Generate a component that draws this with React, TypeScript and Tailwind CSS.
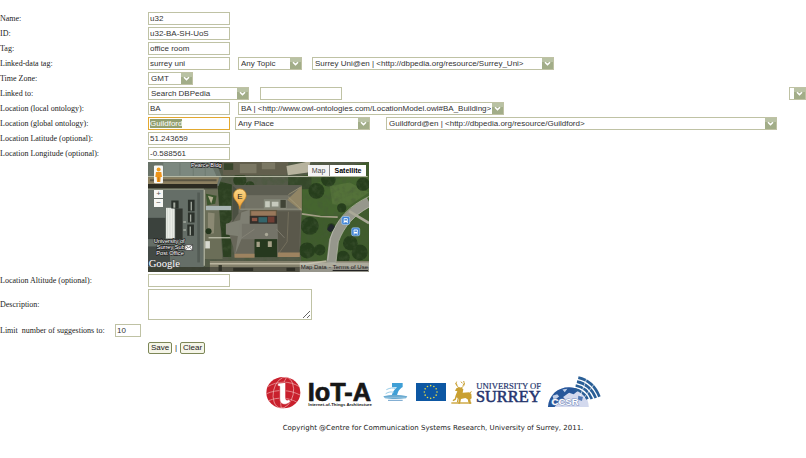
import { useEffect, useRef } from "react";

const inputClass =
  "h-[13px] w-[82px] border border-[#bfc2a4] bg-white px-px font-['Liberation_Sans',sans-serif] text-[8px] leading-[11px] text-[#333] outline-none";

type SelectProps = { id?: string; label: string; value: string; className: string };

function Select({ id, label, value, className }: SelectProps) {
  return (
    <span className={`relative h-[13px] shrink-0 ${className}`}>
      <select
        id={id}
        aria-label={label}
        className="block h-full w-full appearance-none overflow-hidden border border-[#bfc2a4] bg-white pr-3 pl-[2px] font-['Liberation_Sans',sans-serif] text-[8px] leading-[11px] text-[#333] outline-none"
      >
        <option>{value}</option>
      </select>
      <svg viewBox="0 0 11 11" className="pointer-events-none absolute top-px right-px size-[11px]">
        <path d="M0 0h11v11H0z" fill="#a2ad88" />
        <path d="M0 0h11v4H0z" fill="#b9c2a4" />
        <path d="M3 4.2l2.5 2.4L8 4.2" fill="none" stroke="#fff" strokeWidth="1.5" />
      </svg>
    </span>
  );
}

function Label({ id, text }: { id: string; text: string }) {
  return (
    <label htmlFor={id} className="whitespace-nowrap">
      {text}
    </label>
  );
}

function Field({ id, label, value }: { id: string; label: string; value: string }) {
  return (
    <>
      <Label id={id} text={label} />
      <div className="flex">
        <input id={id} type="text" defaultValue={value} className={inputClass} />
      </div>
    </>
  );
}

function Bus({ x, y }: { x: number; y: number }) {
  return (
    <g transform={`translate(${x} ${y})`}>
      <rect x="-12" y="-12" width="24" height="24" rx="5" fill="#3f83d6" stroke="#a9cdf5" strokeWidth="2" />
      <rect x="-6" y="-7" width="12" height="12" rx="2" fill="#fff" />
      <path d="M-4-4h8v4h-8z" fill="#3f83d6" />
      <path d="M-5 5v3M5 5v3" stroke="#fff" strokeWidth="3" />
    </g>
  );
}

function Satellite() {
  return (
    <svg viewBox="24 18 664 331" preserveAspectRatio="xMidYMid slice" className="block h-[110px] w-full">
      <defs>
        <filter id="grain" x="0" y="0" width="100%" height="100%">
          <feTurbulence type="fractalNoise" baseFrequency="0.06" numOctaves="3" seed="4" />
          <feColorMatrix values="0 0 0 0 0.06  0 0 0 0 0.1  0 0 0 0 0.04  2.6 0 0 0 -1.1" />
        </filter>
        <linearGradient id="pin" x2="0" y2="1">
          <stop stopColor="#fbd98c" />
          <stop offset="1" stopColor="#f0a030" />
        </linearGradient>
      </defs>
      <rect x="24" y="18" width="664" height="331" fill="#545a48" />

      {/* park and trees */}
      <path d="M484 60l204-42v331H484z" fill="#3f5c2c" />
      <path d="M488 100l70-30 130-10v70l-90 50H490z" fill="#45652f" />
      <path d="M570 90l60-10 58 30-60 40-50-5z" fill="#547239" />
      <path d="M445 60h70v40h-70z" fill="#35482a" />
      <g fill="#263e1c">
        <circle cx="510" cy="210" r="27" />
        <circle cx="502" cy="284" r="24" />
        <circle cx="540" cy="282" r="17" />
        <circle cx="530" cy="105" r="24" />
        <circle cx="566" cy="70" r="22" />
        <circle cx="606" cy="156" r="14" />
        <circle cx="632" cy="262" r="22" />
        <circle cx="660" cy="290" r="24" />
        <circle cx="610" cy="305" r="20" />
        <circle cx="670" cy="85" r="20" />
        <circle cx="575" cy="214" r="12" />
      </g>
      <g fill="#2c4021">
        <path d="M236 76l40 10-2 218h-24l-6-80-14-60z" />
        <circle cx="300" cy="72" r="20" />
        <circle cx="330" cy="90" r="14" />
      </g>
      <rect x="24" y="18" width="664" height="331" filter="url(#grain)" opacity=".45" />

      {/* northern block */}
      <path d="M24 18h204l18 46-10 26H24z" fill="#687268" />
      <path d="M70 20h142l18 42H70z" fill="#7c887f" />
      <path d="M24 64h214l-6 20H24z" fill="#8c8060" />
      <path d="M30 70h200v6H30z" fill="#5b5643" />
      <path d="M24 84h208v13H24z" fill="#2c2b21" />
      <path d="M120 22v36M160 22v38M196 24v38" stroke="#677269" strokeWidth="2" />
      <path d="M246 18h200l-6 40H250z" fill="#625f4d" />
      <path d="M300 24h50v28h-50zM366 20h40v20h-40z" fill="#7b7864" />
      <path d="M252 22h28v20h-28z" fill="#37452a" />
      <path d="M440 30l60-12h12l-8 32-60 8z" fill="#b7b39e" />
      <path d="M24 62h660" stroke="#b9bda8" strokeWidth="3" fill="none" />

      {/* western block */}
      <path d="M24 100h168v234H24z" fill="#656e67" />
      <path d="M24 100h168" stroke="#9a9d8c" strokeWidth="3" />
      <path d="M192 100h42l14 210h-56z" fill="#6b6e58" />
      <path d="M78 156h26v92H78z" fill="#e9ece6" />
      <path d="M106 158h22v92h-22z" fill="#30352f" />
      <path d="M24 186h52v64H24z" fill="#3b423d" />
      <path d="M24 272h66v60H24z" fill="#424945" />
      <path d="M82 156v92M90 156v92M98 156v92" stroke="#aab2ae" strokeWidth="1" />
      <g fill="#2b312b">
        <path d="M94 134h22v24H94zM144 132h20v34h-20zM144 170h20v30h-20zM142 206h20v34h-20z" />
        <path d="M172 110h8v210h-8z" opacity=".3" />
      </g>
      <g fill="#a4aaa0">
        <path d="M100 140h6v16h-6zM152 138h4v26h-4zM150 176h4v22h-4zM149 212h4v26h-4z" />
        <path d="M130 196h8v5h-8zM130 220h8v5h-8z" />
      </g>
      <path d="M191 102h4v228h-4z" fill="#abae9c" />
      <path d="M198 150h76v13h-76z" fill="#a9b5b3" />
      <path d="M198 114l32 6-4 24-24 4z" fill="#3c552d" />
      <path d="M204 120l16 4-6 20z" fill="#b0ac8e" />
      <path d="M204 170l20 2-2 60-18 4z" fill="#8b8973" />
      <path d="M196 256h14v22h-14z" fill="#d7d9cf" />
      <circle cx="206" cy="226" r="9" fill="#23351d" />
      <path d="M206 246h80" stroke="#d5d5c5" strokeWidth="3" />

      {/* main building */}
      <path d="M278 88h208v80l-8 136H284l-4-30-20-64 18-20z" fill="#68675a" />
      <path d="M278 88h208l-40 30H310z" fill="#5c5d51" />
      <path d="M310 118h136l40 42H300z" fill="#727265" />
      <path d="M486 90v76l-44-34z" fill="#918565" />
      <path d="M446 116l36-22M446 124l38 36" stroke="#aaa17e" strokeWidth="2" />
      <path d="M278 88l32 30-10 48-22 34z" fill="#4b5042" />
      <path d="M258 204l46-12v50l-46-6z" fill="#7f8073" />
      <path d="M304 170l26-8v54l-26 36-18 44z" fill="#7f7f73" />
      <path d="M330 162h82v60h-82z" fill="#625740" />
      <path d="M334 166h74v14h-74z" fill="#99785b" />
      <path d="M330 180h82v42h-82z" fill="#332f2a" />
      <path d="M356 184h26v16h-26z" fill="#34656b" />
      <path d="M384 182h20v18h-20z" fill="#713e34" />
      <path d="M336 186h16v10h-16z" fill="#8c5545" />
      <path d="M306 204h128v46H306z" fill="#747368" />
      <path d="M344 250h68v54h-68z" fill="#26381e" />
      <path d="M350 258h10v16h-10zM384 256h12v18h-12z" fill="#a5a087" />
      <path d="M412 166h70l-4 132h-62z" fill="#5a584b" />
      <path d="M446 168l-4 90-26 36" stroke="#817a65" strokeWidth="2" fill="none" />
      <path d="M284 294h60v12h-60zM414 290h66v14h-66z" fill="#9d8360" />
      <path d="M306 246l38-26M434 246l-24-26" stroke="#8c897b" strokeWidth="2" />
      <path d="M296 128l20 4v30l-20 10" fill="#6d6d61" />
      <circle cx="380" cy="236" r="5" fill="#aaa897" />
      <path d="M372 130h68v28h-68z" fill="#85897a" />
      <path d="M376 136h14v18h-14zM396 138h20v14h-20z" fill="#c6cabd" />
      <path d="M422 132h16v24h-16z" fill="#414436" />
      <path d="M300 160h186" stroke="#abac9b" strokeWidth="2" />

      {/* roads */}
      <path d="M210 316h478v33H210z" fill="#84816c" />
      <path d="M210 324h290l60-8" stroke="#bbb6a0" strokeWidth="5" fill="none" />
      <path d="M236 328h10v18h-10zM280 336h60v10h-60zM440 336h26v10h-26z" fill="#38392c" />
      <path d="M486 174l56 8 52 2" stroke="#a39e86" strokeWidth="5" fill="none" />
      <path d="M688 138c-50 26-86 60-106 116l-8 68" stroke="#96978c" strokeWidth="28" fill="none" />
      <path d="M688 122c-56 26-98 66-116 126l-8 66" stroke="#c5c5b8" strokeWidth="2" fill="none" />
      <path d="M688 154c-44 24-74 56-92 104l-7 60" stroke="#c5c5b8" strokeWidth="2" fill="none" />
      <path d="M628 166l60 36" stroke="#aaa998" strokeWidth="8" />
      <rect x="566" y="206" width="16" height="22" rx="5" transform="rotate(35 574 216)" fill="#20262b" />
      <path d="M24 334h664v15H24z" fill="#23251f" opacity=".5" />
      <path d="M480 320h208v29H480z" fill="#d8d8d0" opacity=".5" />

      <Bus x={618} y={194} />
      <Bus x={648} y={228} />

      {/* place names */}
      <g
        fill="#fff"
        stroke="#222"
        strokeWidth="4"
        paintOrder="stroke"
        fontFamily="Liberation Sans, sans-serif"
        fontSize="17"
      >
        <text x="153" y="33">Pearce Bldg</text>
        <text x="41" y="263">University of</text>
        <text x="50" y="281">Surrey Sub</text>
        <text x="49" y="298">Post Office</text>
      </g>
      <path d="M135 267h23v17h-23z" fill="#fff" stroke="#333" strokeWidth="2" />
      <path d="M135 267l11 9 12-9M135 284l8-9M158 284l-8-9" fill="none" stroke="#333" strokeWidth="2" />

      {/* marker */}
      <path d="M300 160c-2-22-19-26-19-42a19 19 0 0 1 38 0c0 16-17 20-19 42z" fill="url(#pin)" stroke="#c78220" strokeWidth="2" />
      <text x="300" y="128" textAnchor="middle" fontFamily="Liberation Sans, sans-serif" fontSize="24" fill="#222">E</text>

      {/* street view figure */}
      <rect x="42" y="29" width="27" height="53" rx="3" fill="#f7f7f4" />
      <circle cx="56" cy="41" r="6" fill="#ef9d1e" />
      <path d="M48 48h16l2 15h-4l-1 15H51l-1-15h-4z" fill="#ed941b" />
      <path d="M56 64v13" stroke="#b86b0e" strokeWidth="2" />

      <text x="26" y="334" fontFamily="Liberation Serif, serif" fontSize="32" fill="#fff" stroke="#444" strokeWidth="3" paintOrder="stroke">
        Google
      </text>
    </svg>
  );
}

function Map() {
  return (
    <div className="relative w-[221px] overflow-hidden font-['Liberation_Sans',sans-serif]">
      <Satellite />
      <div className="absolute top-7 left-[6px] flex flex-col gap-px text-[8px] leading-[8px] text-[#555]">
        <button type="button" aria-label="Zoom in" className="h-[8px] w-[9px] bg-[#f7f7f4]">+</button>
        <button type="button" aria-label="Zoom out" className="h-[8px] w-[9px] bg-[#f7f7f4]">−</button>
      </div>
      <div className="absolute top-[3px] right-[3px] flex h-[11px] text-[7px] leading-[11px]">
        <button type="button" className="w-[22px] border-r border-[#888] bg-[#f4f4f4] text-[#444]">Map</button>
        <button type="button" className="w-9 bg-white font-bold text-black">Satellite</button>
      </div>
      <div className="absolute right-px bottom-0 flex gap-[2px] text-[6px] leading-[10px] text-[#222]">
        <span>Map Data</span>
        <span>-</span>
        <a href="#terms" className="underline">Terms of Use</a>
      </div>
    </div>
  );
}

const stars = Array.from({ length: 12 }, (_, i) => (i * Math.PI) / 6);

function Logos() {
  return (
    <div className="flex h-9 items-center justify-center">
      {/* IoT-A */}
      <svg viewBox="36 33 321 99" className="mr-[10px] h-[33px] w-[107px]" aria-label="IoT-A">
        <ellipse cx="88" cy="83" rx="51" ry="47" fill="#c9202d" />
        <g fill="none" stroke="#f0b5b5" strokeWidth="2">
          <ellipse cx="88" cy="83" rx="30" ry="47" transform="rotate(12 88 83)" />
          <path d="M41 65c30-18 66-18 95 0M38 86c30-14 70-12 100 4M44 107c28-12 60-9 84 4M98 37C82 60 76 100 82 130" />
        </g>
        <path
          d="M71 55l24-3v46c0 9 6 9 11 4l3 8c-12 13-32 11-32-8V64l-6-1z"
          fill="#fff"
          stroke="#c9202d"
          strokeWidth="2"
        />
        <g fontFamily="Liberation Sans, sans-serif" fontWeight="bold" fill="#171717">
          <text x="161" y="107" fontSize="76" stroke="#171717" strokeWidth="2">IoT-A</text>
          <text x="163" y="124" fontSize="13">Internet-of-Things Architecture</text>
        </g>
      </svg>

      {/* Seventh framework programme */}
      <svg viewBox="386 51 75 60" className="mr-2 h-5 w-[25px]" aria-label="Seventh Framework Programme">
        <path d="M413 54h32v12c-13 8-16 18-18 32h-16c2-15 8-23 17-31h-15z" fill="#3f9fd6" />
        <path d="M396 74c12-6 20-6 28-3M394 86c10-6 16-6 24-4" stroke="#9bcde8" strokeWidth="3" fill="none" />
        <path d="M387 94c20-5 50-5 72 0l-4 6c-20 3-45 3-63 0z" fill="#67a9d0" />
        <path d="M392 97h62" stroke="#dcecf7" strokeWidth="1" />
        <path d="M401 106h44" stroke="#6b9fca" strokeWidth="3" />
      </svg>

      {/* EU flag */}
      <svg viewBox="0 0 90 54" className="mr-[5px] h-[18px] w-[30px]" aria-label="European Union">
        <path d="M0 0h90v54H0z" fill="#0d57a3" />
        {stars.map((a) => (
          <circle key={a} cx={44 + 19 * Math.cos(a)} cy={27 + 19 * Math.sin(a)} r="2.4" fill="#e5da45" />
        ))}
      </svg>

      {/* University of Surrey */}
      <svg viewBox="63 45 276 75" className="mr-1 h-[25px] w-[92px]" aria-label="University of Surrey">
        <g fill="#c9a032">
          <path d="M79 70l8-3 8 1 5 5-2 10 20-1 6 5 1 13-4 3 2 13h-5l-5-13-7-4-13 3-3 14h-5l1-14-6-5-3 8-8 4-1-4 6-4 3-10 5-12-7-2z" />
          <path d="M64 112h60v4H64z" />
        </g>
        <g fill="none" stroke="#c9a032" strokeWidth="3">
          <path d="M89 69c-9-4-13-10-9-19M83 61l-7-6M92 69c9-3 13-10 9-21M98 61l7-6M97 55l-4-5M121 84l3-5" />
          <path d="M85 97l-3 15M114 98l3 14" />
        </g>
        <g fontFamily="Liberation Serif, serif" fill="#26366e" stroke="#26366e">
          <text x="139" y="72" fontSize="26" strokeWidth=".6">UNIVERSITY OF</text>
          <text x="138" y="111" fontSize="49" strokeWidth="1.6">SURREY</text>
        </g>
      </svg>

      {/* CCSR */}
      <svg viewBox="346 31 162 97" className="h-8 w-[54px]" aria-label="CCSR">
        <path d="M348 125c3-37 30-60 64-60 36 0 58 26 60 60z" fill="#d3d9ee" />
        <path d="M348 125c3-37 30-60 64-60 12 0 22 3 31 8l-17 13-14-4-18 13 7 8-18 3-15 19z" fill="#27579a" />
        <path d="M362 91l14-5 6 7-16 12zM392 72l15-2-8 10z" fill="#c2d0e8" />
        <path d="M440 91l14 4-3 12-12-5z" fill="#527ab5" />
        <g fill="none" stroke="#2a5f96" strokeWidth="8">
          <path d="M440 36c28 6 52 27 64 58" />
          <path d="M436 48c26 5 46 23 57 50" />
          <path d="M432 60c23 4 40 19 49 41" />
          <path d="M428 71c18 3 32 13 40 30" />
        </g>
        <path d="M466 38l-20 54M487 57l-30 41" stroke="#fff" strokeWidth="2" />
        <text
          x="359"
          y="119"
          fontFamily="Liberation Sans, sans-serif"
          fontWeight="bold"
          fontSize="29"
          fill="#fff"
          stroke="#7d90be"
          strokeWidth="3"
          paintOrder="stroke"
        >
          CCSR
        </text>
      </svg>
    </div>
  );
}

export default function App() {
  const place = useRef<HTMLInputElement>(null);

  useEffect(() => {
    place.current?.focus();
    place.current?.select();
  }, []);

  return (
    <main className="overflow-x-hidden bg-white pt-3 font-['Liberation_Serif',serif] text-[8px] leading-[13px] text-[#222]">
      <form onSubmit={(e) => e.preventDefault()}>
        <div className="grid grid-cols-[148px_1fr] items-center gap-y-[2px]">
          <Field id="name" label="Name:" value="u32" />
          <Field id="id" label="ID:" value="u32-BA-SH-UoS" />
          <Field id="tag" label="Tag:" value="office room" />

          <Label id="linked-tag" text="Linked-data tag:" />
          <div className="flex gap-2">
            <input id="linked-tag" type="text" defaultValue="surrey uni" className={inputClass} />
            <Select label="Topic" value="Any Topic" className="w-16" />
            <Select label="Linked-data resource" value="Surrey Uni@en | <http://dbpedia.org/resource/Surrey_Uni>" className="ml-[2px] w-[242px]" />
          </div>

          <Label id="timezone" text="Time Zone:" />
          <div className="flex">
            <Select id="timezone" label="Time Zone" value="GMT" className="w-[45px]" />
          </div>

          <Label id="linked-to" text="Linked to:" />
          <div className="flex">
            <Select id="linked-to" label="Linked to" value="Search DBPedia" className="w-[101px]" />
            <input type="text" aria-label="Search DBPedia" className={`ml-[11px] ${inputClass}`} />
            <Select label="Search result" value="" className="ml-auto w-[17px]" />
          </div>

          <Label id="local" text="Location (local ontology):" />
          <div className="flex gap-2">
            <input id="local" type="text" defaultValue="BA" className={inputClass} />
            <Select label="Local resource" value="BA | <http://www.owl-ontologies.com/LocationModel.owl#BA_Building>" className="w-[266px]" />
          </div>

          <Label id="global" text="Location (global ontology):" />
          <div className="flex">
            <input
              id="global"
              ref={place}
              type="text"
              defaultValue="Guildford"
              className="h-[13px] w-[82px] border border-[#e3a92f] bg-white px-px font-['Liberation_Sans',sans-serif] text-[8px] leading-[11px] text-[#333] outline-none selection:bg-[#93a070] selection:text-white"
            />
            <Select label="Place" value="Any Place" className="ml-[5px] w-[135px]" />
            <Select label="Global resource" value="Guildford@en | <http://dbpedia.org/resource/Guildford>" className="ml-4 w-[391px]" />
          </div>

          <Field id="latitude" label="Location Latitude (optional):" value="51.243659" />
          <Field id="longitude" label="Location Longitude (optional):" value="-0.588561" />

          <div className="col-start-2">
            <Map />
          </div>

          <Field id="altitude" label="Location Altitude (optional):" value="" />

          <Label id="description" text="Description:" />
          <textarea id="description" className="block h-[31px] w-[164px] resize border border-[#bfc2a4] bg-white px-px font-['Liberation_Sans',sans-serif] outline-none" />
        </div>

        <div className="mt-1 flex items-center gap-[2px]">
          <label htmlFor="limit" className="w-[113px] whitespace-pre">{"Limit  number of suggestions to:"}</label>
          <input
            id="limit"
            type="text"
            defaultValue="10"
            className="h-[13px] w-[26px] border border-[#bfc2a4] bg-white px-px font-['Liberation_Sans',sans-serif] text-[8px] leading-[11px] text-[#333] outline-none"
          />
        </div>

        <div className="mt-[5px] ml-[148px] flex items-center gap-[3px] font-['Liberation_Sans',sans-serif] leading-[10px]">
          <button type="submit" className="h-3 w-6 rounded-xs border border-[#7d8757] bg-[#f5f5e8]">Save</button>
          <span>|</span>
          <button type="reset" className="h-3 w-[25px] rounded-xs border border-[#7d8757] bg-[#f5f5e8]">Clear</button>
        </div>
      </form>

      <footer className="mt-5 pl-[60px] text-center">
        <Logos />
        <p className="mt-3 font-['DejaVu_Sans',sans-serif] text-[7px]">
          Copyright @Centre for Communication Systems Research, University of Surrey, 2011.
        </p>
      </footer>
    </main>
  );
}
